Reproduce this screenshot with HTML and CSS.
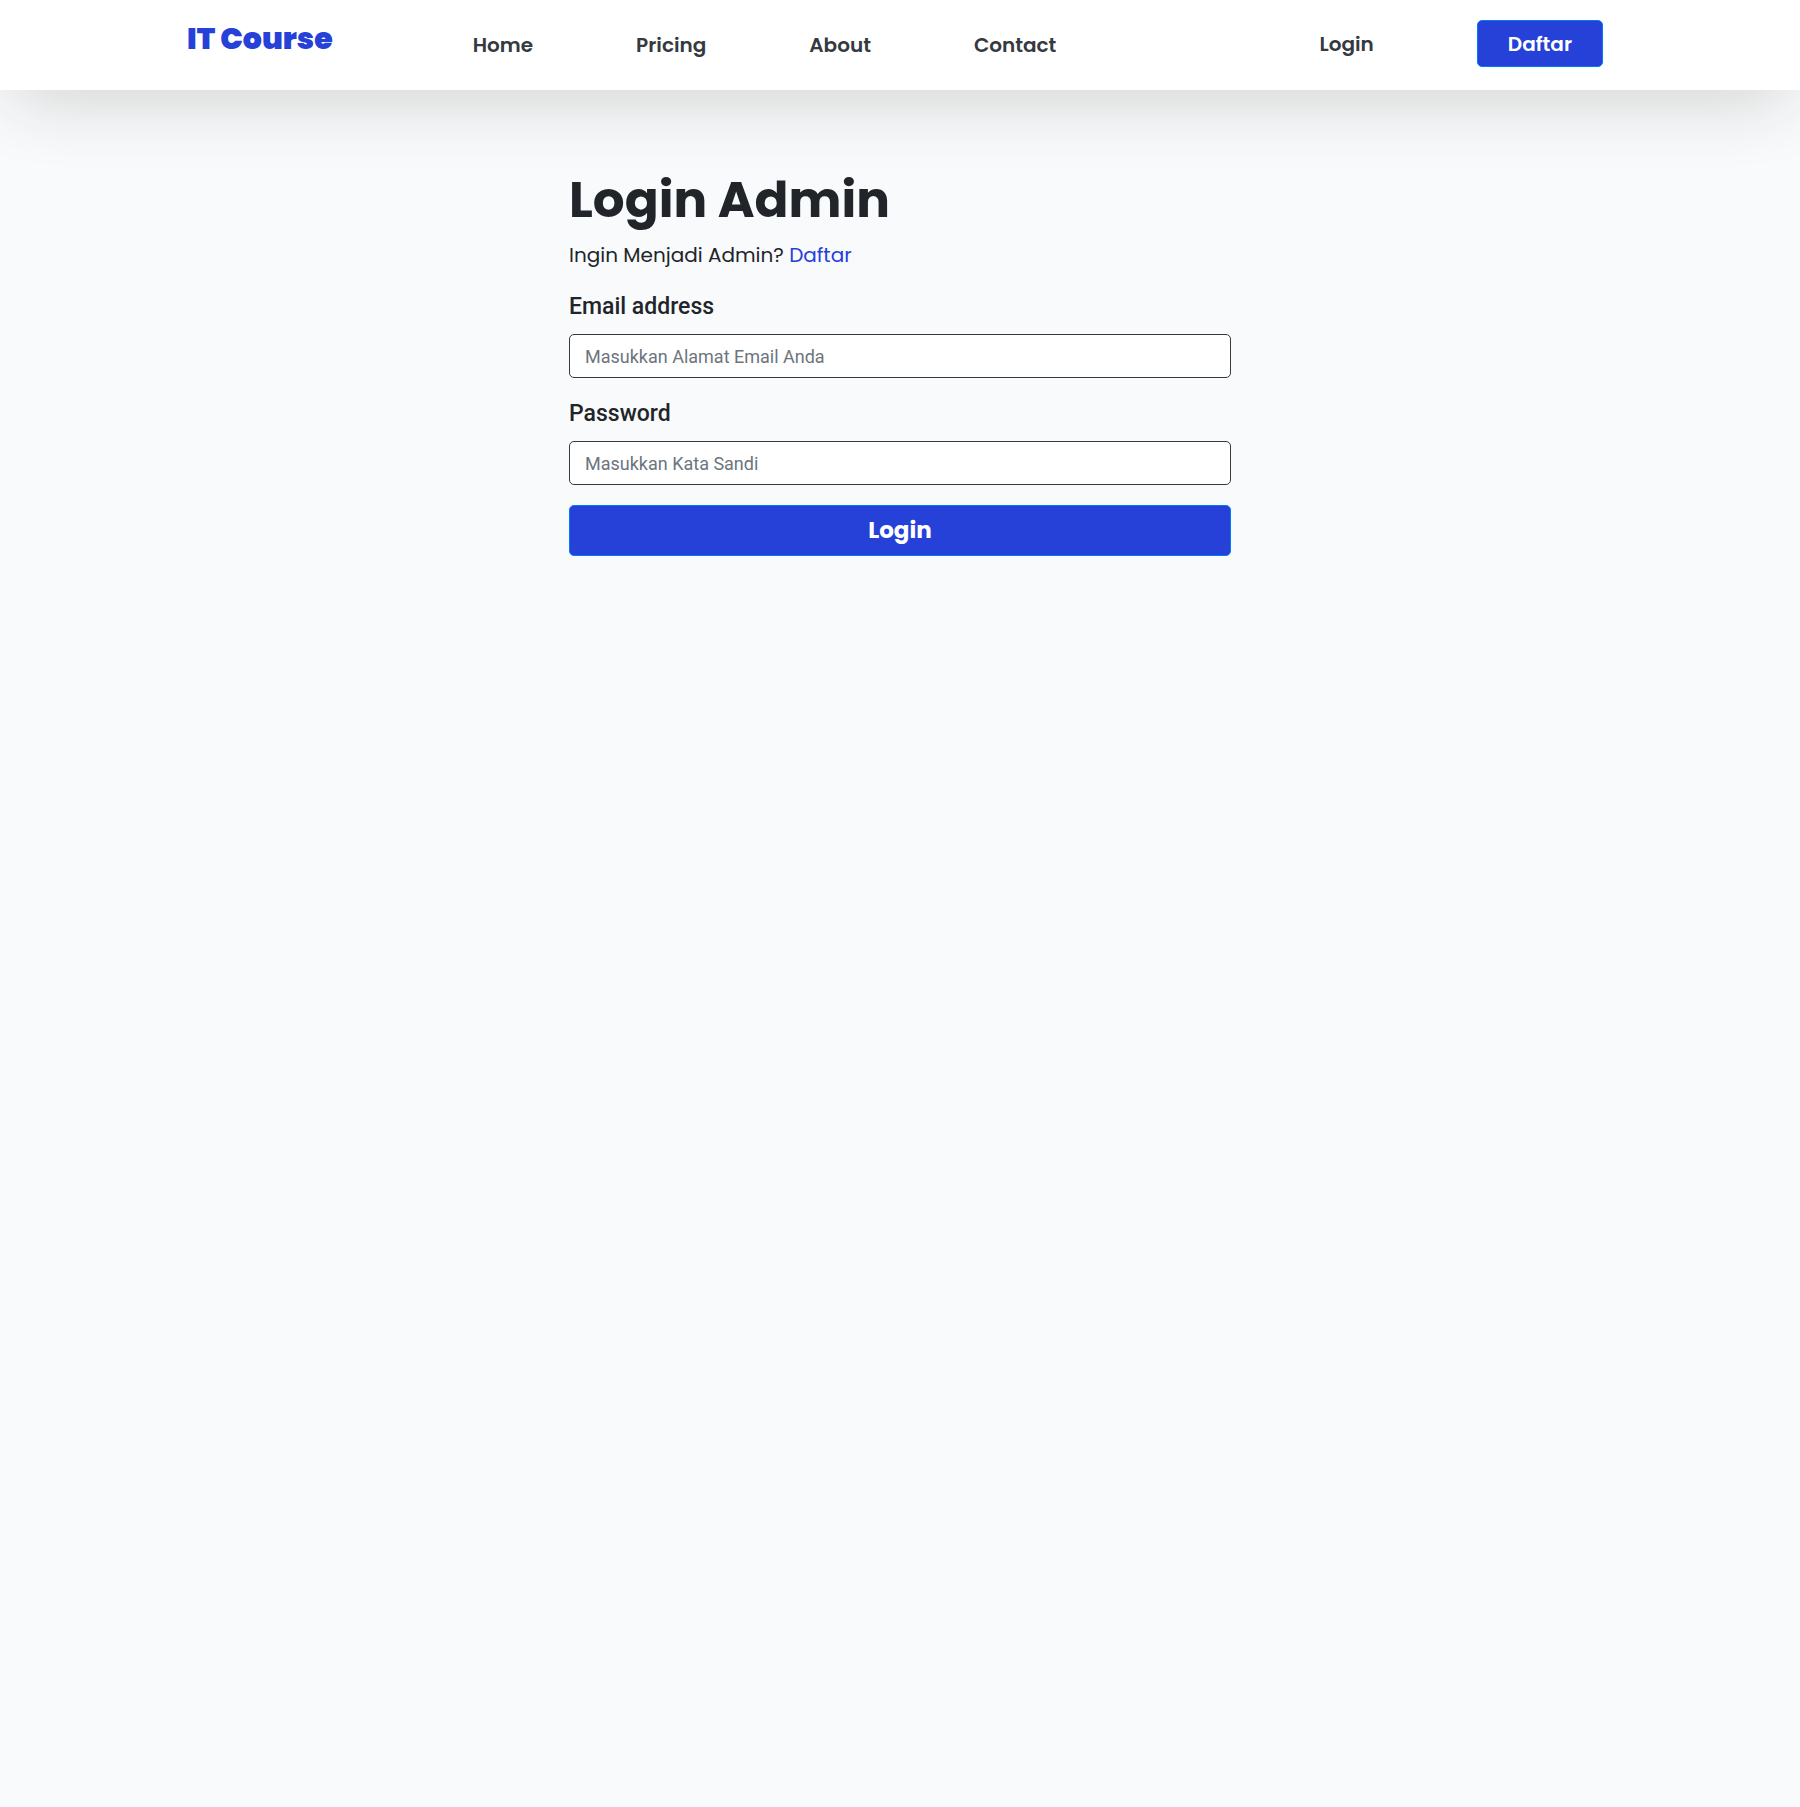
FILE: index.html
```html
<!DOCTYPE html>
<html lang="id">
<head>
  <meta charset="utf-8">
  <meta name="viewport" content="width=device-width, initial-scale=1">
  <title>IT Course - Login Admin</title>
  <link rel="stylesheet" href="styles.css">
</head>
<body>
  <header class="navbar">
    <div class="navbar-inner">
      <a class="brand" href="#">IT Course</a>
      <nav class="menu">
        <a class="nav-link" href="#">Home</a>
        <a class="nav-link" href="#">Pricing</a>
        <a class="nav-link" href="#">About</a>
        <a class="nav-link" href="#">Contact</a>
      </nav>
      <div class="account">
        <a class="nav-link" href="#">Login</a>
        <button class="btn btn-register" type="button">Daftar</button>
      </div>
    </div>
  </header>
  <main class="login">
    <h1 class="title">Login Admin</h1>
    <p class="intro">Ingin Menjadi Admin? <a class="intro-link" href="#">Daftar</a></p>
    <form class="form">
      <div class="field">
        <label class="label" for="email">Email address</label>
        <input class="input" id="email" type="email" placeholder="Masukkan Alamat Email Anda">
      </div>
      <div class="field">
        <label class="label" for="password">Password</label>
        <input class="input" id="password" type="password" placeholder="Masukkan Kata Sandi">
      </div>
      <button class="btn btn-submit" type="submit">Login</button>
    </form>
  </main>
</body>
</html>
```

FILE: styles.css
```css
* {
  box-sizing: border-box;
}

body {
  margin: 0;
  min-height: 100vh;
  background: #f8fafc;
  color: #212529;
  font-family: Poppins, Inter, sans-serif;
  font-size: 20px;
  line-height: 30px;
}

a {
  text-decoration: none;
}

.navbar {
  background: #fff;
  box-shadow: 0 20px 70px -12px rgba(34, 34, 0, 0.19);
}

.navbar-inner {
  display: flex;
  align-items: flex-start;
  width: 80%;
  min-height: 90px;
  margin: 0 auto;
  padding: 20px 17px 0 7px;
}

.brand {
  color: #2541d8;
  font-size: 30px;
  font-weight: 900;
  line-height: 38px;
  margin-right: 140px;
}

.menu {
  display: flex;
  gap: 103px;
  padding-top: 10px;
}

.account {
  display: flex;
  align-items: center;
  gap: 103px;
  margin-left: auto;
}

.nav-link {
  color: #343a40;
  font-weight: 600;
}

.btn {
  border: 1px solid #007bff;
  border-radius: 5px;
  background: #2541d8;
  color: #fff;
  font-family: inherit;
  cursor: pointer;
}

.btn-register {
  height: 47px;
  padding: 0 30px;
  font-size: 20px;
  font-weight: 600;
}

.login {
  width: 100%;
  max-width: 662px;
  margin: 0 auto;
  padding: 80px 0;
}

.title {
  margin: 0 0 10px;
  font-size: 50px;
  font-weight: 700;
  line-height: 60px;
}

.intro {
  margin: 0 0 21px;
}

.intro-link {
  color: #2541d8;
}

.form {
  display: flex;
  flex-direction: column;
  gap: 20px;
  font-family: Roboto, sans-serif;
}

.field {
  display: flex;
  flex-direction: column;
  gap: 11px;
}

.label {
  font-size: 23px;
  font-weight: 500;
  line-height: 32px;
}

.input {
  width: 100%;
  height: 44px;
  padding: 0 15px;
  border: 1px solid #343a40;
  border-radius: 5px;
  background: #fff;
  color: #212529;
  font-family: inherit;
  font-size: 18px;
}

.input::placeholder {
  color: #6c757d;
  opacity: 1;
}

.btn-submit {
  height: 51px;
  padding: 0 16px 2px;
  font-family: Poppins, Inter, sans-serif;
  font-size: 23px;
  font-weight: 700;
}
```
